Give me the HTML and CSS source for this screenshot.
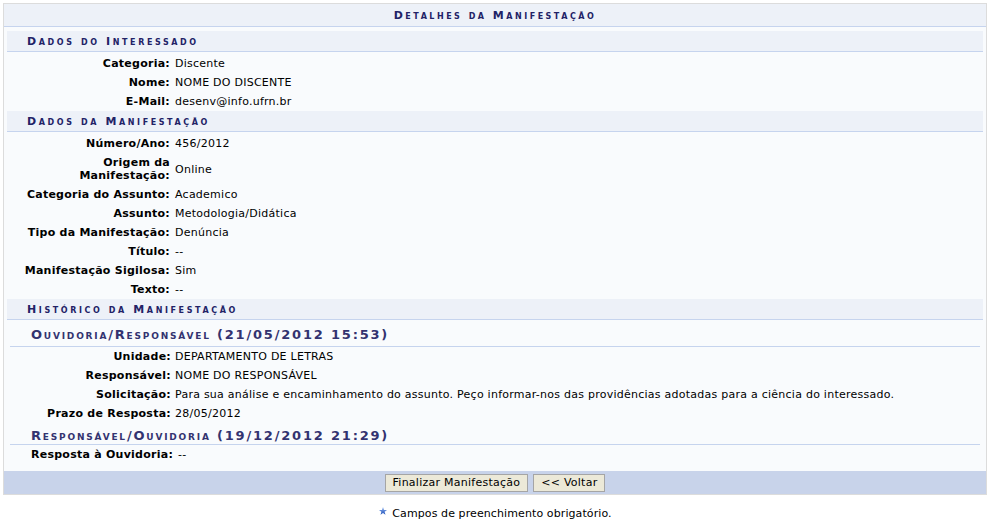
FILE: index.html
```html
<!DOCTYPE html>
<html lang="pt-BR">
<head>
<meta charset="utf-8">
<title>Detalhes da Manifestação</title>
<link rel="stylesheet" href="styles.css">
</head>
<body>
<div class="form">
  <div class="caption">Detalhes da Manifestação</div>
  <div class="content">
    <div class="sec">Dados do Interessado</div>
    <div class="rows">
      <div class="lbl">Categoria:</div><div class="val">Discente</div>
      <div class="lbl">Nome:</div><div class="val">NOME DO DISCENTE</div>
      <div class="lbl">E-Mail:</div><div class="val">desenv@info.ufrn.br</div>
    </div>
    <div class="sec">Dados da Manifestação</div>
    <div class="rows">
      <div class="lbl">Número/Ano:</div><div class="val">456/2012</div>
      <div class="lbl">Origem da<br>Manifestação:</div><div class="val">Online</div>
      <div class="lbl">Categoria do Assunto:</div><div class="val">Academico</div>
      <div class="lbl">Assunto:</div><div class="val">Metodologia/Didática</div>
      <div class="lbl">Tipo da Manifestação:</div><div class="val">Denúncia</div>
      <div class="lbl">Título:</div><div class="val">--</div>
      <div class="lbl">Manifestação Sigilosa:</div><div class="val">Sim</div>
      <div class="lbl">Texto:</div><div class="val">--</div>
    </div>
    <div class="sec">Histórico da Manifestação</div>
    <div class="hist">
      <div class="subhead subhead-first">Ouvidoria/Responsável (21/05/2012 15:53)</div>
      <div class="rows rows-sub">
        <div class="lbl">Unidade:</div><div class="val">DEPARTAMENTO DE LETRAS</div>
        <div class="lbl">Responsável:</div><div class="val">NOME DO RESPONSÁVEL</div>
        <div class="lbl">Solicitação:</div><div class="val">Para sua análise e encaminhamento do assunto. Peço informar-nos das providências adotadas para a ciência do interessado.</div>
        <div class="lbl">Prazo de Resposta:</div><div class="val">28/05/2012</div>
      </div>
      <div class="subhead">Responsável/Ouvidoria (19/12/2012 21:29)</div>
      <div class="rows rows-auto">
        <div class="lbl">Resposta à Ouvidoria:</div><div class="val">--</div>
      </div>
    </div>
  </div>
  <div class="actions">
    <button type="button" class="btn">Finalizar Manifestação</button>
    <button type="button" class="btn">&lt;&lt; Voltar</button>
  </div>
</div>
<p class="note">
  <svg class="star" width="8" height="8" viewBox="0 0 10 10" aria-hidden="true">
    <defs>
      <linearGradient id="sg" x1="0" y1="0" x2="0" y2="1">
        <stop offset="0" stop-color="#8fb4f0"/>
        <stop offset="1" stop-color="#1e4fb8"/>
      </linearGradient>
    </defs>
    <polygon points="5,0 6.2,3.6 10,3.7 7,6 8.1,9.8 5,7.6 1.9,9.8 3,6 0,3.7 3.8,3.6" fill="url(#sg)"/>
  </svg>
  <span>Campos de preenchimento obrigatório.</span>
</p>
</body>
</html>
```

FILE: styles.css
```css
* { box-sizing: border-box; }

body {
  margin: 0;
  background: #ffffff;
  font-family: "DejaVu Sans", Verdana, sans-serif;
  font-size: 11px;
  color: #000;
}

.form {
  margin: 3px 4px 0 3px;
  border: 1px solid #dcdcdc;
  background: #f9fbfd;
  letter-spacing: 0.25px;
}

.caption {
  height: 23px;
  padding-top: 1px;
  line-height: 21px;
  background: #edf1f8;
  border-bottom: 1px solid #c6d4ee;
  text-align: center;
  font-weight: bold;
  font-variant: small-caps;
  letter-spacing: 2.5px;
  color: #222266;
}

.content {
  padding: 4px 3px 7px 3px;
}

.sec {
  height: 21px;
  padding: 2px 0 0 20px;
  line-height: 18px;
  background: #edf1f8;
  border-bottom: 1px solid #c6d4ee;
  font-weight: bold;
  font-variant: small-caps;
  letter-spacing: 2.6px;
  color: #222266;
}

.rows {
  display: grid;
  grid-template-columns: 166px 1fr;
  margin-top: 2px;
}

.lbl {
  padding: 3px 3px 3px 0;
  line-height: 13px;
  text-align: right;
  font-weight: bold;
  white-space: nowrap;
  display: flex;
  flex-direction: column;
  align-items: flex-end;
  justify-content: center;
}

.val {
  padding: 3px 0 3px 2px;
  line-height: 13px;
  display: flex;
  align-items: center;
}

.hist {
  margin: 0 3px;
}

.subhead {
  padding: 4px 0 0 21px;
  line-height: 17px;
  border-bottom: 1px solid #c6d4ee;
  font-size: 13px;
  font-weight: bold;
  font-variant: small-caps;
  letter-spacing: 1.8px;
  color: #333370;
}

.subhead-first {
  padding-top: 6px;
  padding-bottom: 3px;
}

.rows-sub {
  margin-top: 0;
  grid-template-columns: 163px 1fr;
}

.rows-sub .lbl {
  padding-right: 2px;
}

.rows-auto {
  margin-top: 0;
  grid-template-columns: auto 1fr;
  padding-left: 21px;
}

.actions {
  height: 23px;
  background: #c8d3ea;
  display: flex;
  justify-content: center;
  align-items: center;
  gap: 5px;
}

.btn {
  height: 18px;
  padding: 0 7px;
  border: 1px solid #a5a5a5;
  background: #ece9d8;
  font-family: "DejaVu Sans", Verdana, sans-serif;
  font-size: 11px;
  letter-spacing: 0.25px;
  color: #000;
  border-radius: 0;
}

.note {
  margin: 12px 0 0 0;
  display: flex;
  justify-content: center;
  align-items: center;
  gap: 5px;
  font-size: 11px;
  letter-spacing: 0.1px;
}

.star {
  margin-top: -6px;
}
```
